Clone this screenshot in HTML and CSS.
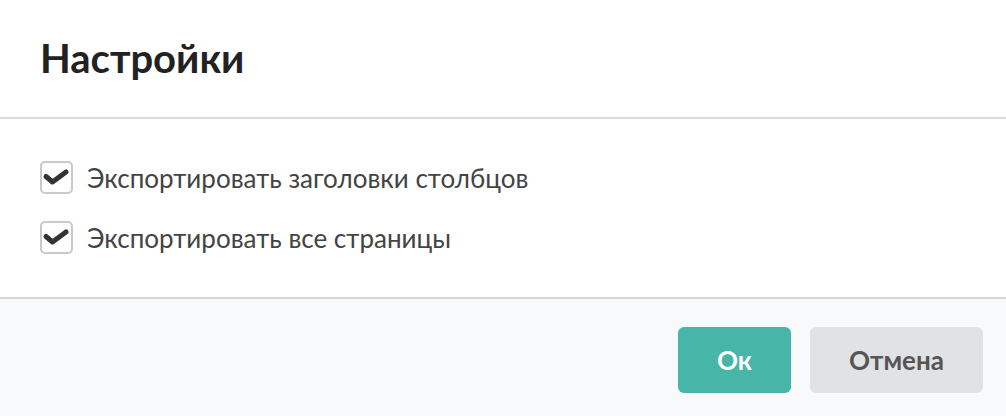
FILE: index.html
```html
<!DOCTYPE html>
<html lang="ru">
<head>
    <meta charset="UTF-8">
    <title>Настройки</title>
    <link rel="stylesheet" href="styles.css">
</head>
<body>
    <div class="dialog">
        <div class="dialog-header">
            <h1 class="dialog-title">Настройки</h1>
        </div>
        <div class="dialog-body">
            <label class="option">
                <span class="checkbox">
                    <svg viewBox="0 0 29 29" width="29" height="29"><path d="M4 13.5 L10.5 19 L24 9" fill="none" stroke="#333" stroke-width="5" stroke-linecap="round" stroke-linejoin="round"/></svg>
                </span>
                <span class="option-text">Экспортировать заголовки столбцов</span>
            </label>
            <label class="option">
                <span class="checkbox">
                    <svg viewBox="0 0 29 29" width="29" height="29"><path d="M4 13.5 L10.5 19 L24 9" fill="none" stroke="#333" stroke-width="5" stroke-linecap="round" stroke-linejoin="round"/></svg>
                </span>
                <span class="option-text">Экспортировать все страницы</span>
            </label>
        </div>
        <div class="dialog-footer">
            <button class="btn btn-ok">Ок</button>
            <button class="btn btn-cancel">Отмена</button>
        </div>
    </div>
</body>
</html>
```

FILE: styles.css
```css
body {
    margin: 0;
    font-family: 'Lato', 'Open Sans', sans-serif;
    background: #fff;
}
.dialog {
    width: 1006px;
    height: 416px;
    display: flex;
    flex-direction: column;
}
.dialog-header {
    height: 117px;
    display: flex;
    align-items: center;
    padding-left: 40px;
    border-bottom: 2px solid #dcdcdc;
}
.dialog-title {
    margin: 0 0 2px;
    font-size: 40px;
    font-weight: 700;
    color: #222;
}
.dialog-body {
    padding: 42px 40px 43px;
    display: flex;
    flex-direction: column;
    gap: 27px;
}
.option {
    display: flex;
    align-items: center;
    height: 33px;
}
.checkbox {
    box-sizing: border-box;
    width: 33px;
    height: 33px;
    border: 2px solid #c9c9c9;
    border-radius: 5px;
    display: flex;
    align-items: center;
    justify-content: center;
}
.option-text {
    margin-left: 14px;
    font-size: 26px;
    color: #444;
}
.dialog-footer {
    flex: 1;
    background: #f8f9fb;
    border-top: 2px solid #d5d6d9;
    display: flex;
    justify-content: flex-end;
    align-items: flex-start;
    gap: 19px;
    padding: 28px 23px 0;
}
.btn {
    height: 66px;
    border: none;
    border-radius: 6px;
    font-family: inherit;
    font-size: 26px;
    font-weight: 700;
    cursor: pointer;
}
.btn-ok {
    width: 113px;
    background: #48b5a9;
    color: #fff;
}
.btn-cancel {
    width: 173px;
    background: #e1e2e4;
    color: #555;
}
```
